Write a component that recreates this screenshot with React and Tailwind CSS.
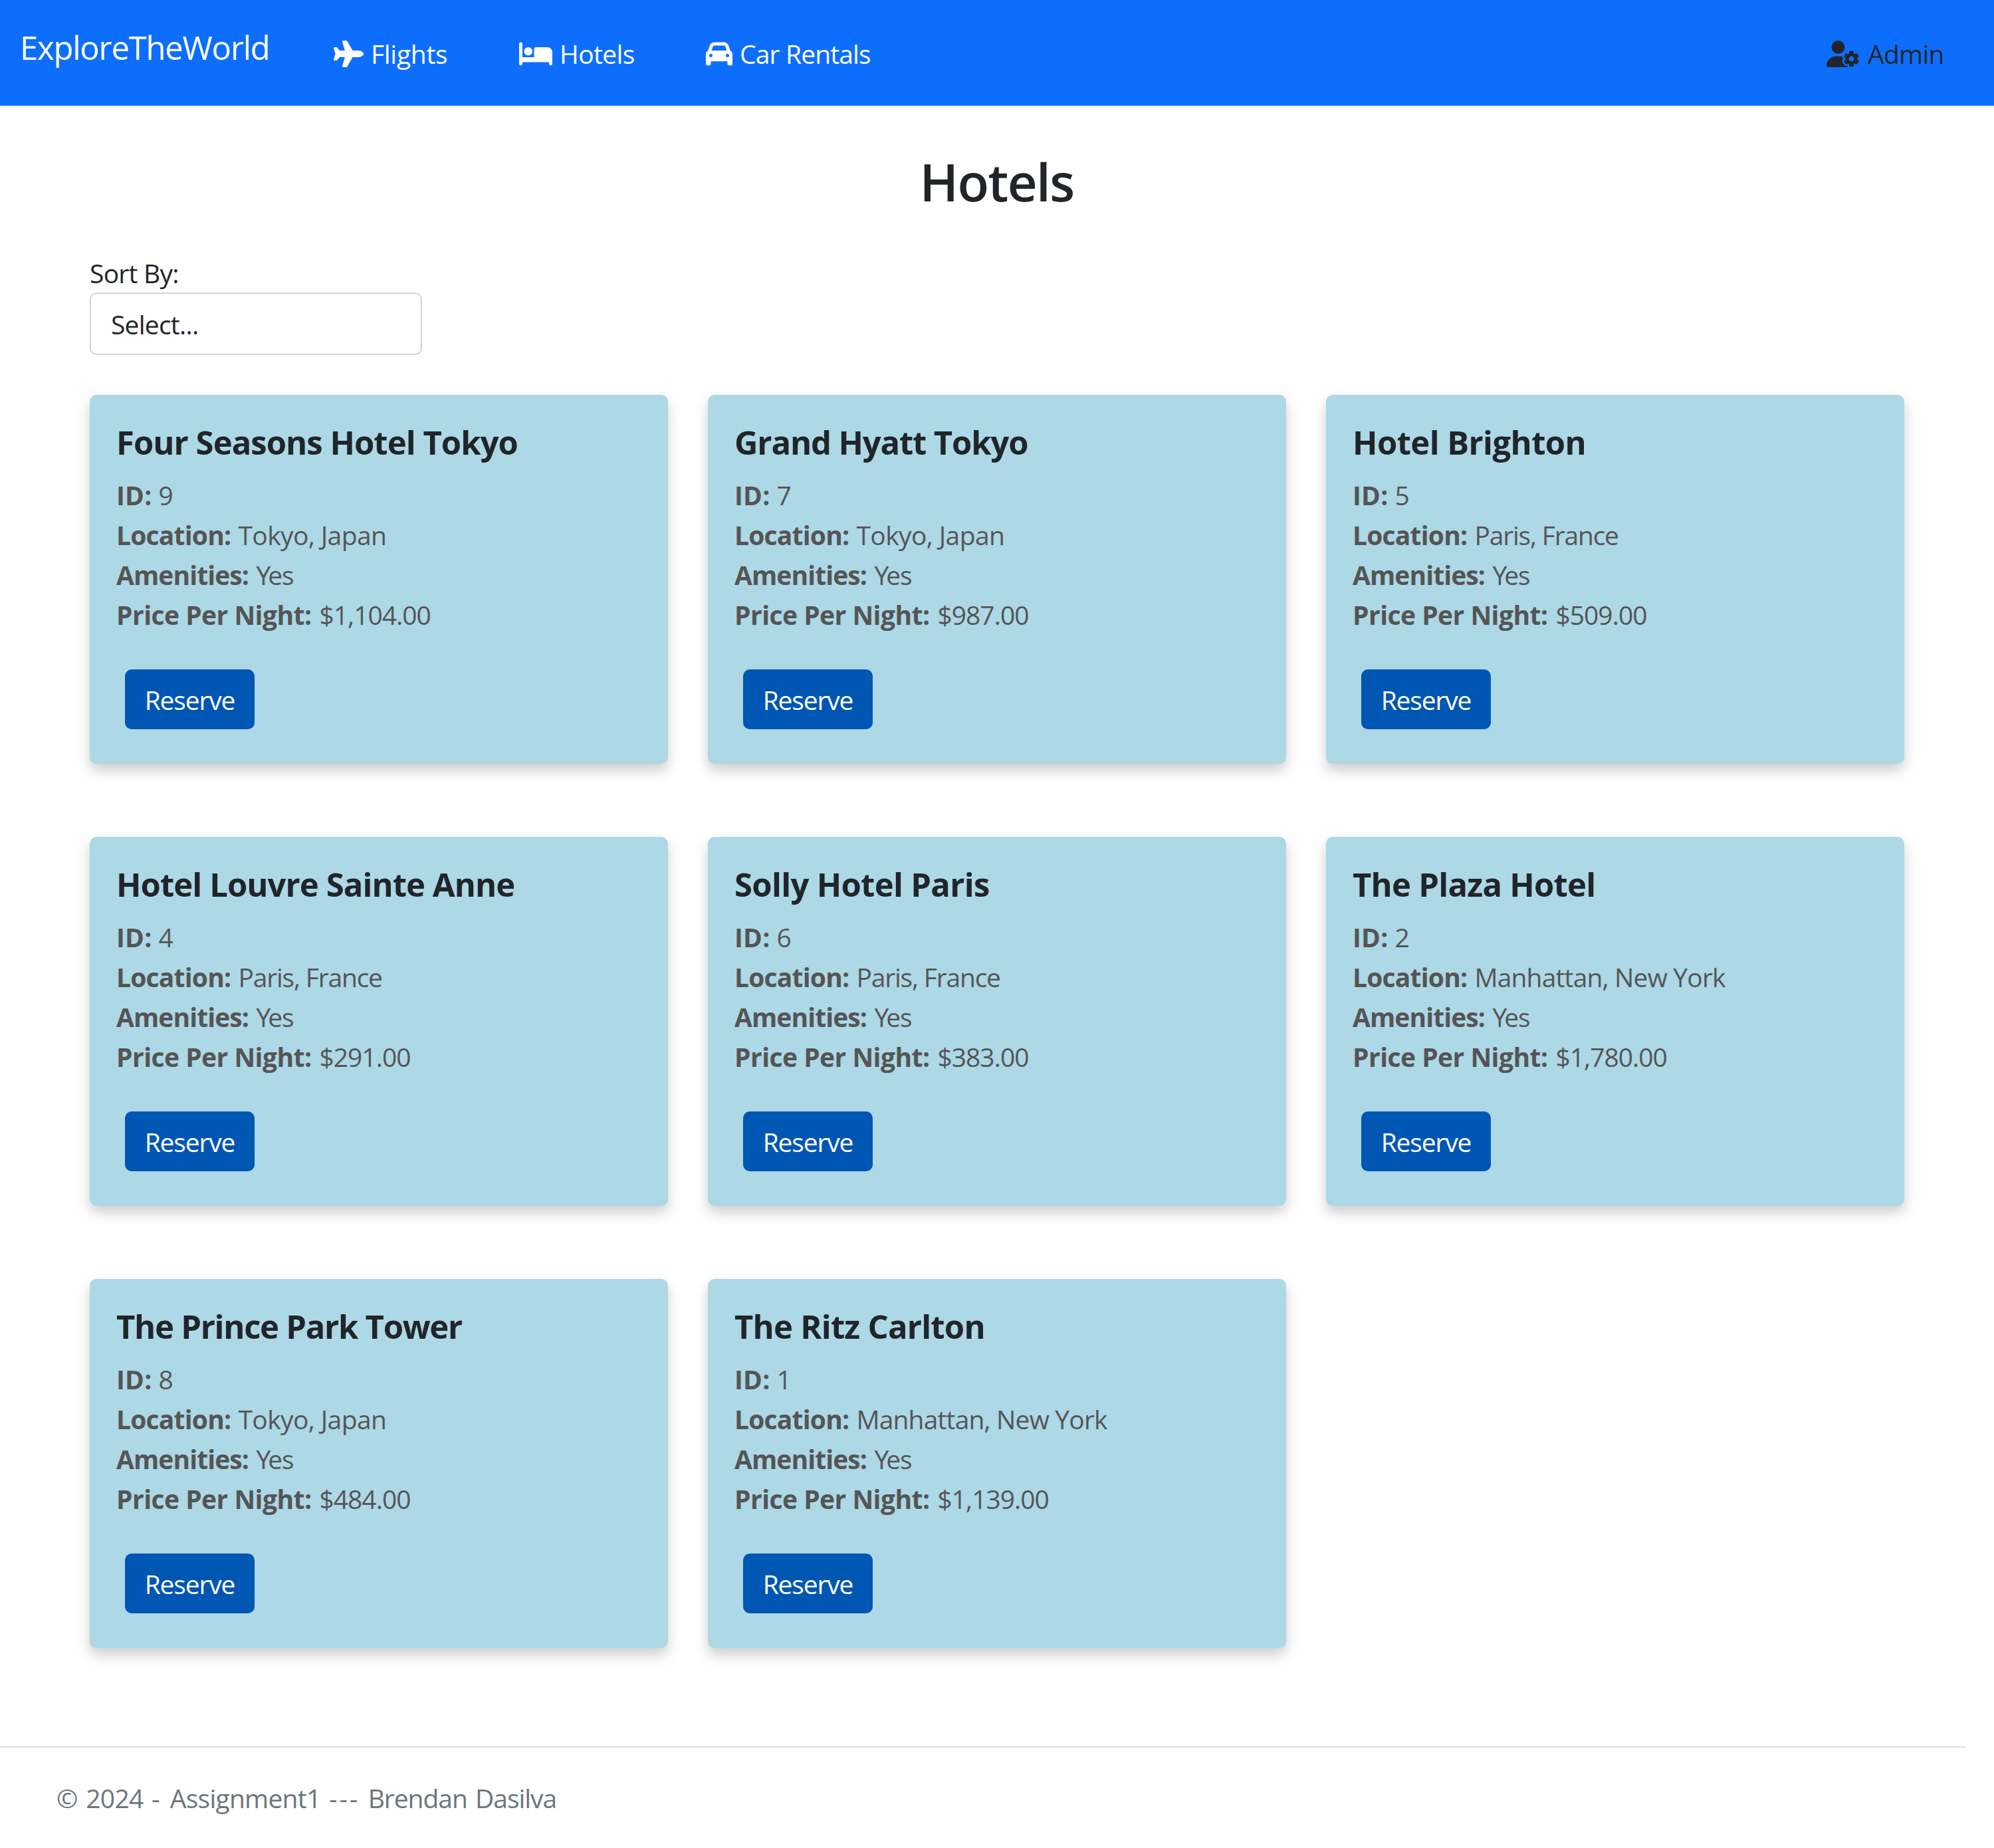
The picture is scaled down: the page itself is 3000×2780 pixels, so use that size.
import React from "react";
import { FaPlane, FaBed, FaCar, FaUserGear } from "react-icons/fa6";

const hotels = [
  { id: 9, name: "Four Seasons Hotel Tokyo", nameClass: "tracking-[-0.96px]", location: "Tokyo, Japan", locationClass: "tracking-[-0.62px]", price: "$1,104.00" },
  { id: 7, name: "Grand Hyatt Tokyo", nameClass: "tracking-[-1.14px]", location: "Tokyo, Japan", locationClass: "tracking-[-0.62px]", price: "$987.00" },
  { id: 5, name: "Hotel Brighton", nameClass: "tracking-[-0.6px]", location: "Paris, France", locationClass: "tracking-[-1.2px]", price: "$509.00" },
  { id: 4, name: "Hotel Louvre Sainte Anne", nameClass: "tracking-[-0.93px]", location: "Paris, France", locationClass: "tracking-[-1.2px]", price: "$291.00" },
  { id: 6, name: "Solly Hotel Paris", nameClass: "tracking-[-0.7px]", location: "Paris, France", locationClass: "tracking-[-1.2px]", price: "$383.00" },
  { id: 2, name: "The Plaza Hotel", nameClass: "tracking-[-0.76px]", location: "Manhattan, New York", locationClass: "tracking-[-0.84px]", price: "$1,780.00" },
  { id: 8, name: "The Prince Park Tower", nameClass: "tracking-[-1.28px]", location: "Tokyo, Japan", locationClass: "tracking-[-0.62px]", price: "$484.00" },
  { id: 1, name: "The Ritz Carlton", nameClass: "tracking-[-0.78px]", location: "Manhattan, New York", locationClass: "tracking-[-0.84px]", price: "$1,139.00" },
];

function HotelCard({ hotel }) {
  return (
    <article className="h-[555px] rounded-[10px] bg-[#add8e6] px-10 pt-[41px] shadow-[0_10px_20px_rgba(0,0,0,0.2)]">
      <h2 className={`mb-5 text-[49px] leading-[60px] font-bold ${hotel.nameClass}`}>{hotel.name}</h2>
      <div className="tracking-[-0.68px] text-[#555]">
        <p>
          <strong className="inline-block w-[54px] tracking-[0.2px]">ID:</strong> {hotel.id}
        </p>
        <p>
          <strong className="inline-block w-[174px] tracking-[-0.8px]">Location:</strong>{" "}
          <span className={hotel.locationClass}>{hotel.location}</span>
        </p>
        <p>
          <strong className="inline-block w-[201px] tracking-[-0.92px]">Amenities:</strong>{" "}
          <span className="tracking-[-1.2px]">
            <span className="tracking-[-4px]">Y</span>es
          </span>
        </p>
        <p>
          <strong className="inline-block w-[296px] tracking-[-0.53px]">Price Per Night:</strong>{" "}
          <span className="tracking-[-1px]">{hotel.price}</span>
        </p>
      </div>
      <button className="mt-[52px] ml-[13px] h-[90px] w-[195px] rounded-[10px] bg-[#0056b3] pt-0.5 tracking-[-1.15px] text-white">
        Reserve
      </button>
    </article>
  );
}

export default function App() {
  return (
    <div className="flex h-[2780px] w-[3000px] flex-col bg-white font-['Open_Sans','Noto_Sans',sans-serif] text-[39px] leading-[60px] text-[#212529]">
      <header className="flex h-[159px] items-start bg-[#0d6efd] pl-[30px] text-white">
        <a className="mt-[34px] w-[472px] text-[49px] leading-[75px] tracking-[-1.22px]">ExploreTheWorld</a>
        <nav className="flex flex-1 pt-[51px]">
          <a className="flex w-[279px] items-start tracking-[-0.3px]">
            <FaPlane className="mt-[10px] mr-[11px] h-10 w-[45px]" />
            Flights
          </a>
          <a className="flex w-[281px] items-start tracking-[-0.6px]">
            <FaBed className="mt-[10px] mr-[11px] h-10 w-[50px]" />
            Hotels
          </a>
          <a className="flex items-start tracking-[-0.85px]">
            <FaCar className="mt-[10px] mr-[11px] h-10 w-10" />
            Car Rentals
          </a>
          <a className="mr-[75px] ml-auto flex w-[177px] items-start tracking-[-0.73px]">
            <FaUserGear className="mt-[10px] mr-[12px] h-10 w-[50px] text-[#212529]" />
            <span className="text-[#212529]">Admin</span>
          </a>
        </nav>
      </header>

      <main className="flex-1 px-[135px] pt-[66px]">
        <h1 className="pr-px text-center text-[78px] leading-[96px] font-semibold tracking-[-1.6px]">Hotels</h1>
        <div className="mt-[60px] w-[500px]">
          <label className="block h-[59px] tracking-[-0.75px]">Sort By:</label>
          <div className="h-[94px] rounded-[10px] border-2 border-[#ced4da] px-[30px] pt-4 tracking-[-0.77px]">
            Select...
          </div>
        </div>
        <section className="mt-[60px] grid grid-cols-3 gap-x-[60px] gap-y-[110px]">
          {hotels.map((hotel) => (
            <HotelCard key={hotel.id} hotel={hotel} />
          ))}
        </section>
      </main>

      <footer className="h-[153px] w-[2958px] border-t-2 border-[#dee2e6] pt-[46px] pl-[85px] tracking-[-0.75px] text-[#6c757d] [word-spacing:3.2px]">
        © 2024 <span className="tracking-[2.6px]">-</span> Assignment1{" "}
        <span className="tracking-[2.8px]">---</span> <span className="tracking-[-1.05px]">Brendan Dasilva</span>
      </footer>
    </div>
  );
}
